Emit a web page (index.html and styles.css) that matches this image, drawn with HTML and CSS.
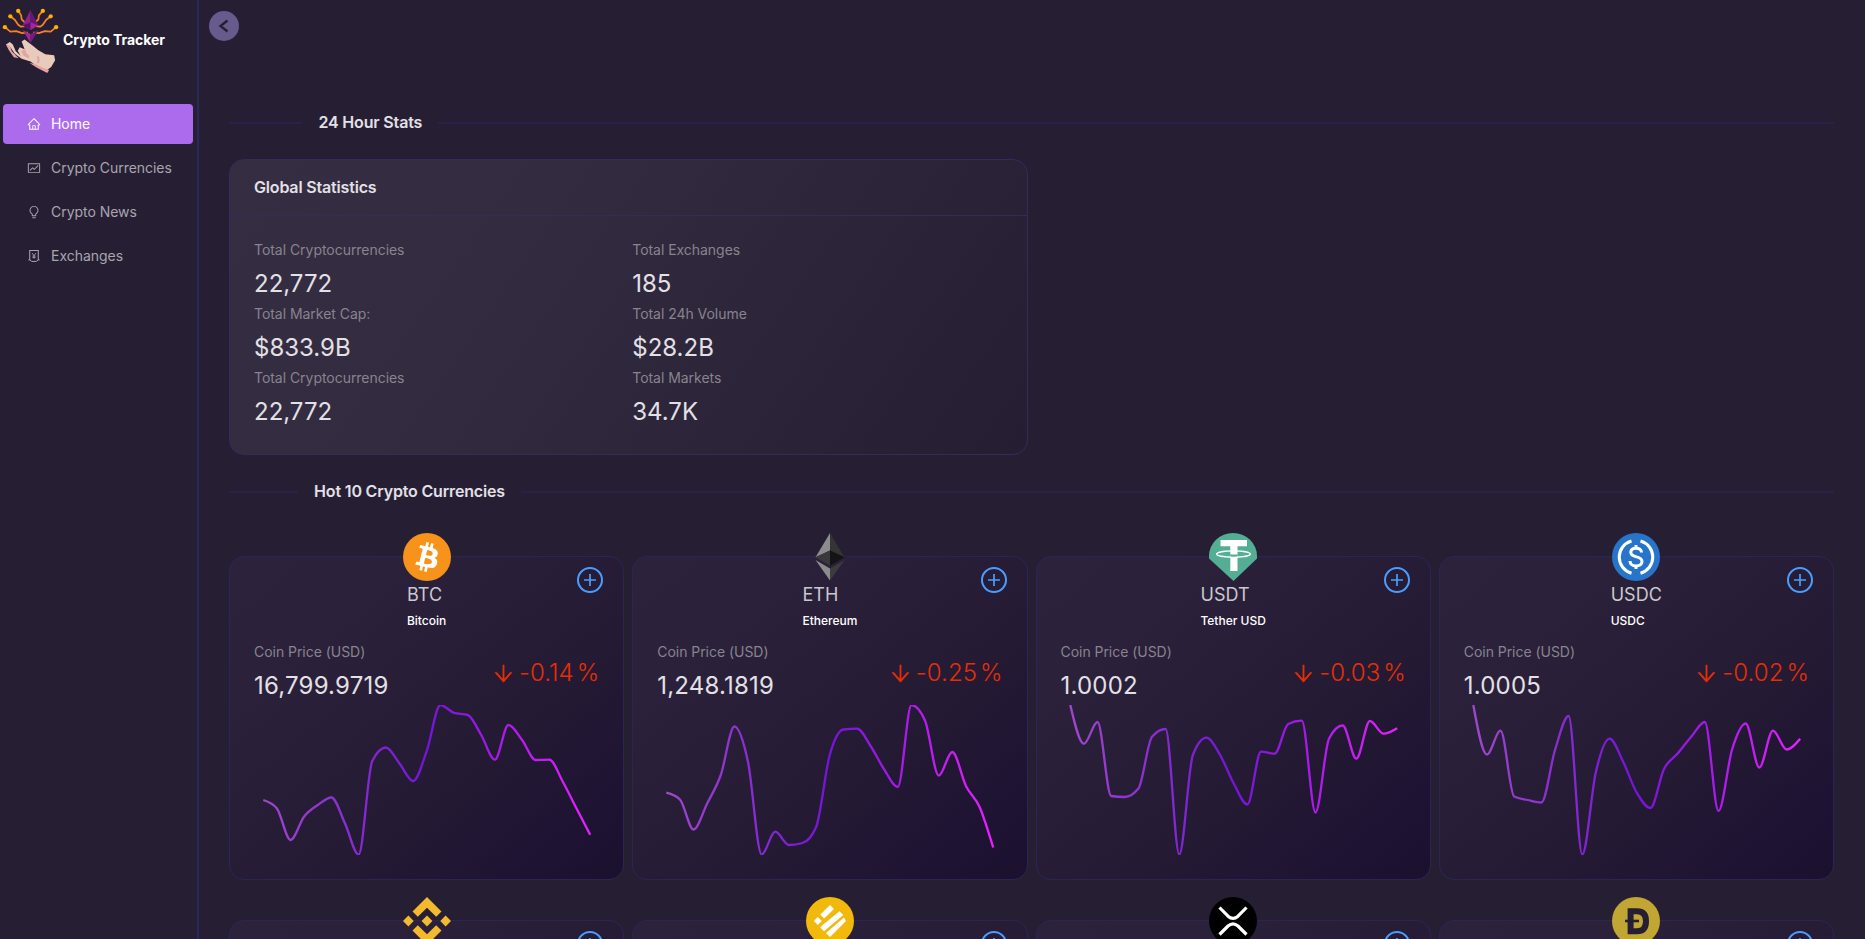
FILE: index.html
```html
<!DOCTYPE html>
<html lang="en">
<head>
<meta charset="utf-8">
<title>Crypto Tracker</title>
<link rel="stylesheet" href="styles.css">
</head>
<body>
<div class="app">
  <aside class="sidebar">
    <div class="brand">
      <svg class="brand-logo" viewBox="0 0 64 72">
        <g fill="none" stroke="#f98029" stroke-width="1.8" stroke-linejoin="round">
          <path d="M5 25.500l5.500 4.500 6-.5 6 2 6-.5"/><path d="M11 15l4 3 3.500 5 2.500 2 5-.5"/><path d="M19 9.500l2.500 4 .5 4 4 4"/>
          <path d="M57 25.500l-5.500 4.500-6-.5-6 2-6-.5"/><path d="M51 15l-4 3-3.500 5-2.500 2-5-.5"/><path d="M43 9.500l-3.500 4-.5 4-4 4"/>
        </g>
        <g fill="#ffb000"><circle cx="5" cy="25.500" r="2.200"/><circle cx="10.500" cy="14.500" r="2.200"/><circle cx="18.500" cy="9" r="2.200"/><circle cx="57" cy="25.500" r="2.200"/><circle cx="51.500" cy="14.500" r="2.200"/><circle cx="43.500" cy="9" r="2.200"/></g>
        <path d="M31 8l-8 15.500 8 4.500z" fill="#8d2288"/><path d="M31 8l8 15.500-8 4.500z" fill="#6a1578"/>
        <path d="M31 20.500l8 3.300-8 4.700-8-4.700z" fill="#a32a8c"/><path d="M31 20.500v8l-8-4.700z" fill="#54106c"/>
        <path d="M23 28.500l8 4v9z" fill="#a32a8c"/><path d="M39 28.500l-8 4v9z" fill="#7a1a80"/>
        <path d="M6 43l4-2.500 3 2.500 3 7 5 4.500-3-5 2-3.500 5 2-3-8 3-2 8 6 6 5 7 4 9 1 1 5-4 7-5 3.500-9-4-7-5-9-3-7-5-4-6z" fill="#e9cbbc"/>
        <path d="M6 43l4 1 2 6 7 7-5-1-5-7zM21.500 50l4-2 1.500 4 3 3-1 2-5-2.500zM30 62l6 1 8 4 6 2-2 3-10-5z" fill="#e5a3a4"/>
        <path d="M38 55q2.500 4 0 7" fill="none" stroke="#e5a3a4" stroke-width="2"/>
      </svg>
      <span class="brand-name">Crypto Tracker</span>
    </div>
    <nav class="menu">
      <a class="menu-item menu-item--active">
        <svg class="menu-icon" viewBox="0 0 1024 1024"><path d="M946.5 505L560.1 118.800l-25.900-25.900a31.500 31.500 0 0 0-44.400 0L77.500 505a63.900 63.900 0 0 0-18.800 46c.4 35.200 29.700 63.300 64.900 63.300h42.500V940h691.800V614.300h43.400c17.100 0 33.200-6.700 45.300-18.800a63.600 63.600 0 0 0 18.700-45.300c0-17-6.700-33.100-18.800-45.200zM568 868H456V664h112v204zm217.900-325.700V868H632V640c0-22.100-17.900-40-40-40H432c-22.100 0-40 17.900-40 40v228H238.100V542.300h-96l370-369.700 23.100 23.100L882 542.300h-96.100z"/></svg>
        <span>Home</span></a>
      <a class="menu-item">
        <svg class="menu-icon" viewBox="0 0 1024 1024"><path d="M926 164H94c-17.700 0-32 14.300-32 32v640c0 17.700 14.300 32 32 32h832c17.700 0 32-14.300 32-32V196c0-17.700-14.300-32-32-32zm-40 632H134V236h752v560zm-658.900-82.300c3.100 3.100 8.200 3.100 11.300 0l172.500-172.500 114.400 114.500c3.100 3.100 8.200 3.100 11.300 0l297-297.200c3.100-3.100 3.100-8.200 0-11.300l-36.800-36.800a8.030 8.030 0 0 0-11.300 0L531 565 416.600 450.500a8.030 8.030 0 0 0-11.300 0l-214.900 215a8.030 8.030 0 0 0 0 11.300l36.700 36.900z"/></svg>
        <span>Crypto Currencies</span></a>
      <a class="menu-item">
        <svg class="menu-icon" viewBox="0 0 1024 1024"><path d="M632 888H392c-4.400 0-8 3.600-8 8v32c0 17.700 14.300 32 32 32h192c17.700 0 32-14.300 32-32v-32c0-4.400-3.600-8-8-8zM512 64c-181.100 0-328 146.900-328 328 0 121.400 66 227.400 164 284.100V792c0 17.700 14.300 32 32 32h264c17.700 0 32-14.300 32-32V676.100c98-56.700 164-162.700 164-284.100 0-181.100-146.900-328-328-328zm127.900 549.800L604 634.600V752H420V634.600l-35.900-20.800C305.400 568.300 256 484.500 256 392c0-141.400 114.600-256 256-256s256 114.600 256 256c0 92.500-49.400 176.300-128.100 221.800z"/></svg>
        <span>Crypto News</span></a>
      <a class="menu-item">
        <svg class="menu-icon" viewBox="0 0 1024 1024"><g fill="none" stroke="currentColor" stroke-width="76"><path d="M200 800V110h624v690"/><path d="M100 800h110l140 110h324l140-110h110" stroke-width="72"/><path d="M380 300l132 200 132-200M512 500v210M400 520h224M400 618h224" stroke-width="62"/></g></svg>
        <span>Exchanges</span></a>
    </nav>
  </aside>

  <main class="content">
    <button class="collapse" aria-label="Collapse menu"><svg viewBox="0 0 30 30"><path d="M18.500 9.500L11.500 15l7 5.500" fill="none" stroke="#261f34" stroke-width="2.300"/></svg></button>

    <h2 class="divider divider--stats">24 Hour Stats</h2>

    <section class="stats">
      <header class="stats-head">Global Statistics</header>
      <div class="stats-body">
        <div class="stat"><div class="stat-label">Total Cryptocurrencies</div><div class="stat-value">22,772</div></div>
        <div class="stat"><div class="stat-label">Total Exchanges</div><div class="stat-value">185</div></div>
        <div class="stat"><div class="stat-label">Total Market Cap:</div><div class="stat-value">$833.9B</div></div>
        <div class="stat"><div class="stat-label">Total 24h Volume</div><div class="stat-value">$28.2B</div></div>
        <div class="stat"><div class="stat-label">Total Cryptocurrencies</div><div class="stat-value">22,772</div></div>
        <div class="stat"><div class="stat-label">Total Markets</div><div class="stat-value">34.7K</div></div>
      </div>
    </section>

    <h2 class="divider divider--hot">Hot 10 Crypto Currencies</h2>

    <section class="coins">
      <article class="coin">
        <svg class="coin-logo" viewBox="0 0 32 32"><circle cx="16" cy="16" r="16" fill="#f7931a"/><path fill="#fff" d="M23.189 14.020c.314-2.096-1.283-3.223-3.465-3.975l.708-2.840-1.728-.430-.690 2.765c-.454-.114-.920-.220-1.385-.326l.695-2.783L15.596 6l-.708 2.839c-.376-.086-.746-.170-1.104-.260l.002-.009-2.384-.595-.460 1.846s1.283.294 1.256.312c.700.175.826.638.805 1.006l-.806 3.235c.048.012.110.030.180.057l-.183-.045-1.130 4.532c-.086.212-.303.531-.793.410.018.025-1.256-.313-1.256-.313l-.858 1.978 2.250.561c.418.105.828.215 1.231.318l-.715 2.872 1.727.430.708-2.840c.472.127.930.245 1.378.357l-.706 2.828 1.728.430.715-2.866c2.948.558 5.164.333 6.097-2.333.752-2.146-.037-3.385-1.588-4.192 1.130-.260 1.980-1.003 2.207-2.538zm-3.950 5.538c-.533 2.147-4.148.986-5.320.695l.950-3.805c1.172.293 4.929.872 4.370 3.110zm.535-5.569c-.487 1.953-3.495.960-4.470.717l.860-3.450c.975.243 4.118.696 3.610 2.733z"/></svg>
        <button class="add" aria-label="Add"><svg viewBox="0 0 26 26"><use href="#plus"/></svg></button>
        <div class="coin-title"><div class="coin-symbol">BTC</div><div class="coin-name">Bitcoin</div></div>
        <div class="coin-row">
          <div class="coin-price"><div class="stat-label">Coin Price (USD)</div><div class="stat-value">16,799.9719</div></div>
          <div class="coin-change"><svg viewBox="0 0 1024 1024"><use href="#down"/></svg><span>-0.14 %</span></div>
        </div>
        <svg class="chart" viewBox="0 0 345 150" data-y="95,103.500,135,111.500,100,92.500,118.500,149.500,56,42.500,58.500,76,46,0,7.800,9.800,30,54.700,20,35,55,54.700,77,103.500,129.700"></svg>
      </article>

      <article class="coin">
        <svg class="coin-logo" viewBox="0 0 48 48"><path fill="#8c8c8c" d="M24 0L9.500 24.300 24 17.500z"/><path fill="#343434" d="M24 0l14.500 24.300L24 17.500z"/><path fill="#393939" d="M24 17.500L9.500 24.300 24 32.800z"/><path fill="#141414" d="M24 17.500l14.500 6.800L24 32.800z"/><path fill="#8c8c8c" d="M9.500 27L24 35.600V47.500z"/><path fill="#3c3c3b" d="M38.500 27L24 35.600V47.500z"/></svg>
        <button class="add" aria-label="Add"><svg viewBox="0 0 26 26"><use href="#plus"/></svg></button>
        <div class="coin-title"><div class="coin-symbol">ETH</div><div class="coin-name">Ethereum</div></div>
        <div class="coin-row">
          <div class="coin-price"><div class="stat-label">Coin Price (USD)</div><div class="stat-value">1,248.1819</div></div>
          <div class="coin-change"><svg viewBox="0 0 1024 1024"><use href="#down"/></svg><span>-0.25 %</span></div>
        </div>
        <svg class="chart" viewBox="0 0 345 150" data-y="87.700,94.500,124.500,98.500,70,21.500,57,149.500,126.700,140,138,122,50,24.500,23.700,41,64.500,82,0,15.700,70.500,47,81,102,142.500"></svg>
      </article>

      <article class="coin">
        <svg class="coin-logo" viewBox="0 0 48 48"><path fill="#53ae94" d="M0 25.500V23a24 23 0 0 1 48 0v2.500L24.500 48z"/><path fill="#fff" d="M11.500 7H38v6.200h-9.500V38h-7.200V13.200h-9.800z"/><ellipse cx="24.500" cy="21" rx="16.800" ry="3.200" fill="none" stroke="#fff" stroke-width="1.300"/><path d="M21.300 21.200q3.500.4 7.200 0v2.300q-3.700.3-7.200 0z" fill="#53ae94"/></svg>
        <button class="add" aria-label="Add"><svg viewBox="0 0 26 26"><use href="#plus"/></svg></button>
        <div class="coin-title"><div class="coin-symbol">USDT</div><div class="coin-name">Tether USD</div></div>
        <div class="coin-row">
          <div class="coin-price"><div class="stat-label">Coin Price (USD)</div><div class="stat-value">1.0002</div></div>
          <div class="coin-change"><svg viewBox="0 0 1024 1024"><use href="#down"/></svg><span>-0.03 %</span></div>
        </div>
        <svg class="chart" viewBox="0 0 345 150" data-y="0,38.800,17,91,92,83.500,31.700,24,149.500,50,32.700,50,78.500,99.500,46.700,48.700,19,15.700,107.500,33.500,20.500,53.700,16,28.700,23.300"></svg>
      </article>

      <article class="coin">
        <svg class="coin-logo" viewBox="0 0 48 48"><circle cx="24" cy="24" r="24" fill="#2775ca"/><g fill="none" stroke="#fff" stroke-width="3"><path d="M19.500 8a16.700 16.700 0 0 0 0 32.200M28.500 8a16.700 16.700 0 0 1 0 32.200"/><path d="M29.500 19.500c0-3-2.300-4.300-5.500-4.300-3.100 0-5.200 1.500-5.200 4.100 0 6.300 11.200 2.800 11.200 9.100 0 2.800-2.500 4.500-6 4.500s-6-1.800-6-5M24 12v3.500M24 32.500V36"/></g></svg>
        <button class="add" aria-label="Add"><svg viewBox="0 0 26 26"><use href="#plus"/></svg></button>
        <div class="coin-title"><div class="coin-symbol">USDC</div><div class="coin-name">USDC</div></div>
        <div class="coin-row">
          <div class="coin-price"><div class="stat-label">Coin Price (USD)</div><div class="stat-value">1.0005</div></div>
          <div class="coin-change"><svg viewBox="0 0 1024 1024"><use href="#down"/></svg><span>-0.02 %</span></div>
        </div>
        <svg class="chart" viewBox="0 0 345 150" data-y="0,49.500,25.700,91.500,95,97.500,45,11,149.500,67,33.700,56.700,87.700,103,64,48.500,31.700,17,106,44.500,18.500,62.500,25.700,44.500,33.700"></svg>
      </article>

      <article class="coin">
        <svg class="coin-logo" viewBox="0 0 48 48"><g fill="#f3ba2f"><path d="M24 0l14.500 14.500-5.300 5.300L24 10.700l-9.200 9.100-5.300-5.300zM24 48l14.500-14.500-5.300-5.300L24 37.300l-9.200-9.100-5.300 5.300zM24 18.600l5.400 5.400-5.400 5.400-5.400-5.400zM5.400 18.600l5.300 5.400-5.300 5.400L0 24zM42.600 18.600L48 24l-5.400 5.400-5.300-5.400z"/></g></svg>
        <button class="add" aria-label="Add"><svg viewBox="0 0 26 26"><use href="#plus"/></svg></button>
      </article>
      <article class="coin">
        <svg class="coin-logo" viewBox="0 0 48 48"><circle cx="24" cy="24" r="24" fill="#f0b90b"/><g fill="#fff"><path d="M24 8l4 4-9.800 9.500-4-3.800zM33.500 14.200l3.800 3.800L18 34.300l-4-4zM38 20.500l2 3.500-16 16-4-4zM11.800 20l4 4-4 4-4-4z"/></g></svg>
        <button class="add" aria-label="Add"><svg viewBox="0 0 26 26"><use href="#plus"/></svg></button>
      </article>
      <article class="coin">
        <svg class="coin-logo" viewBox="0 0 48 48"><circle cx="24" cy="24" r="24"/><g fill="none" stroke="#fff" stroke-width="3.200"><path d="M10.500 10.500l8.500 8.700q5 4.200 10 0l8.500-8.700M10.500 37.500L19 29q5-4.200 10 0l8.500 8.500"/></g></svg>
        <button class="add" aria-label="Add"><svg viewBox="0 0 26 26"><use href="#plus"/></svg></button>
      </article>
      <article class="coin">
        <svg class="coin-logo" viewBox="0 0 48 48"><circle cx="24" cy="24" r="24" fill="#c2a633"/><path d="M18.600 14.200H25q9 0 9 10t-9 10h-6.400z" fill="none" stroke="#261f34" stroke-width="6"/><path d="M13 24h14" stroke="#261f34" stroke-width="2.600"/></svg>
        <button class="add" aria-label="Add"><svg viewBox="0 0 26 26"><use href="#plus"/></svg></button>
      </article>
    </section>
  </main>
</div>

<svg class="defs" width="0" height="0">
  <defs>
    <g id="plus" fill="none" stroke="#4a9dff" stroke-width="2"><circle cx="13" cy="13" r="12"/><path d="M13 7v12M7 13h12" stroke-width="1.700"/></g>
    <path id="down" d="M862 465.300h-81c-4.600 0-9 2-12.100 5.500L550 723.100V160c0-4.400-3.600-8-8-8h-60c-4.400 0-8 3.600-8 8v563.100L255.100 470.800c-3-3.500-7.400-5.500-12.100-5.500h-81c-6.800 0-10.500 8.100-6 13.200L487.900 861a31.960 31.960 0 0 0 48.300 0L868 478.500c4.500-5.200.8-13.200-6-13.200z"/>
    <linearGradient id="line" gradientUnits="userSpaceOnUse" x1="0" y1="0" x2="345" y2="0"><stop offset="0" stop-color="#a04bc9"/><stop offset=".5" stop-color="#7415d6"/><stop offset="1" stop-color="#ea22ff"/></linearGradient>
  </defs>
</svg>
<script src="chart.js"></script>
</body>
</html>
```
FILE: styles.css
```css
* { box-sizing: border-box; }

body {
  margin: 0;
  height: 939px;
  overflow: hidden;
  background: #261f34;
  color: #e3e0e6;
  font: 14px/22px Inter, "Liberation Sans", sans-serif;
}

.defs { position: absolute; }
svg { display: block; }

button {
  padding: 0;
  border: 0;
  background: none;
}

.app {
  display: flex;
  height: 939px;
  overflow: hidden;
}

/* Sidebar */
.sidebar {
  flex: 0 0 199px;
  border-right: 2px solid #2a2759;
}

.brand {
  display: flex;
  align-items: center;
  height: 104px;
  padding-bottom: 29px;
}

.brand-logo { width: 63px; height: 71px; }

.brand-name {
  margin-top: 4px;
  color: #fff;
  font-weight: 700;
  letter-spacing: -0.05px;
}

.menu {
  display: flex;
  flex-direction: column;
  gap: 4px;
  padding: 0 4px 0 3px;
}

.menu-item {
  display: flex;
  align-items: center;
  gap: 10px;
  height: 40px;
  padding-left: 24px;
  border-radius: 4px;
  color: #a8a5ae;
  letter-spacing: -0.03px;
}

.menu-item--active {
  background: #ac6bec;
  color: #fff;
}

.menu-icon { width: 14px; height: 14px; fill: currentColor; }

/* Content */
.content {
  flex: 1;
  padding: 11px 31px 0 30px;
}

.collapse {
  display: block;
  width: 30px;
  height: 30px;
  margin-left: -20px;
  border-radius: 50%;
  background: #675a8c;
}

.divider {
  display: flex;
  align-items: center;
  margin: 0;
  font-size: 16px;
  font-weight: 600;
  letter-spacing: -0.17px;
  line-height: 26px;
  white-space: nowrap;
}

.divider::before,
.divider::after {
  content: "";
  width: 5%;
  margin-top: 2px;
  border-top: 2px solid #282248;
}

.divider::before { margin-right: 16px; }
.divider::after { width: 95%; margin-left: 16px; }
.divider--stats { padding-top: 68px; }
.divider--hot { padding-top: 23px; }

.stats {
  width: calc(50% - 4px);
  height: 296px;
  margin-top: 24px;
  border: 1px solid #302c5c;
  border-radius: 15px;
  background: linear-gradient(125deg, #352d42 0%, #332b40 35%, #251e33 100%);
}

.stats-head {
  height: 56px;
  padding: 0 24px;
  border-bottom: 1px solid #302c5c;
  font-size: 16px;
  font-weight: 600;
  letter-spacing: -0.17px;
  line-height: 54px;
}

.stats-body {
  display: grid;
  grid-template-columns: 1fr 1fr;
  column-gap: 8px;
  padding: 24px;
}

.stat { height: 64px; }
.stat .stat-label { line-height: 20px; }

.stat-label {
  height: 24px;
  color: #88838e;
  letter-spacing: -0.04px;
}

.stat-value {
  font-size: 24px;
  line-height: 40px;
}

/* Coin cards */
.coins {
  display: grid;
  grid-template-columns: repeat(4, 1fr);
  gap: 40px 8px;
  margin-top: 52px;
}

.coin {
  position: relative;
  height: 324px;
  padding: 24px;
  border: 1px solid #2b2556;
  border-radius: 15px;
  background: linear-gradient(140deg, #2c223c 0%, #2b213b 22%, #241a33 62%, #1f1333 86%, #1c102f 100%);
}

.coin-logo {
  position: absolute;
  top: -24px;
  left: calc(50% - 24px);
  width: 48px;
  height: 48px;
}

.add {
  position: absolute;
  top: 10px;
  right: 20px;
}

.add svg { width: 26px; height: 26px; }

.coin-title { width: max-content; margin: 0 auto; }

.coin-symbol {
  color: #c9c8d0;
  font-size: 18px;
  letter-spacing: 0.1px;
  line-height: 28px;
}

.coin-name {
  color: #fff;
  font-size: 12px;
  font-weight: 500;
  line-height: 24px;
}

.coin-row {
  display: flex;
  justify-content: space-between;
  padding-top: 8px;
}

.coin-price { height: 64px; }

.coin-price .stat-value {
  letter-spacing: 0.2px;
  line-height: 41px;
}

.coin-change {
  display: flex;
  align-items: center;
  gap: 3px;
  height: 64px;
  color: #e62e05;
  font-size: 24px;
  font-weight: 300;
  letter-spacing: 0.1px;
  word-spacing: -4px;
}

.coin-change svg { width: 25px; height: 25px; fill: currentColor; }

.chart {
  width: 345px;
  height: 150px;
  overflow: hidden;
}

.chart path {
  fill: none;
  stroke: url(#line);
  stroke-width: 2.3;
}
```
FILE: chart.js
```js
// Draws each price series as a monotone cubic curve.
document.querySelectorAll('.chart').forEach(function (svg) {
  var y = svg.dataset.y.split(',').map(Number);
  var start = 9.3, step = 13.62, n = y.length, m = [];
  for (var i = 1; i < n - 1; i++) {
    var a = (y[i] - y[i - 1]) / step, b = (y[i + 1] - y[i]) / step;
    m[i] = (Math.sign(a) + Math.sign(b)) * Math.min(Math.abs(a), Math.abs(b), Math.abs(a + b) / 4) || 0;
  }
  m[0] = (3 * (y[1] - y[0]) / step - m[1]) / 2;
  m[n - 1] = (3 * (y[n - 1] - y[n - 2]) / step - m[n - 2]) / 2;
  var d = 'M' + start + ',' + y[0];
  for (i = 1; i < n; i++) {
    var x = start + i * step, t = step / 3;
    d += 'C' + [x - step + t, y[i - 1] + m[i - 1] * t, x - t, y[i] - m[i] * t, x, y[i]].join(',');
  }
  var path = document.createElementNS('http://www.w3.org/2000/svg', 'path');
  path.setAttribute('d', d);
  svg.appendChild(path);
});
```
